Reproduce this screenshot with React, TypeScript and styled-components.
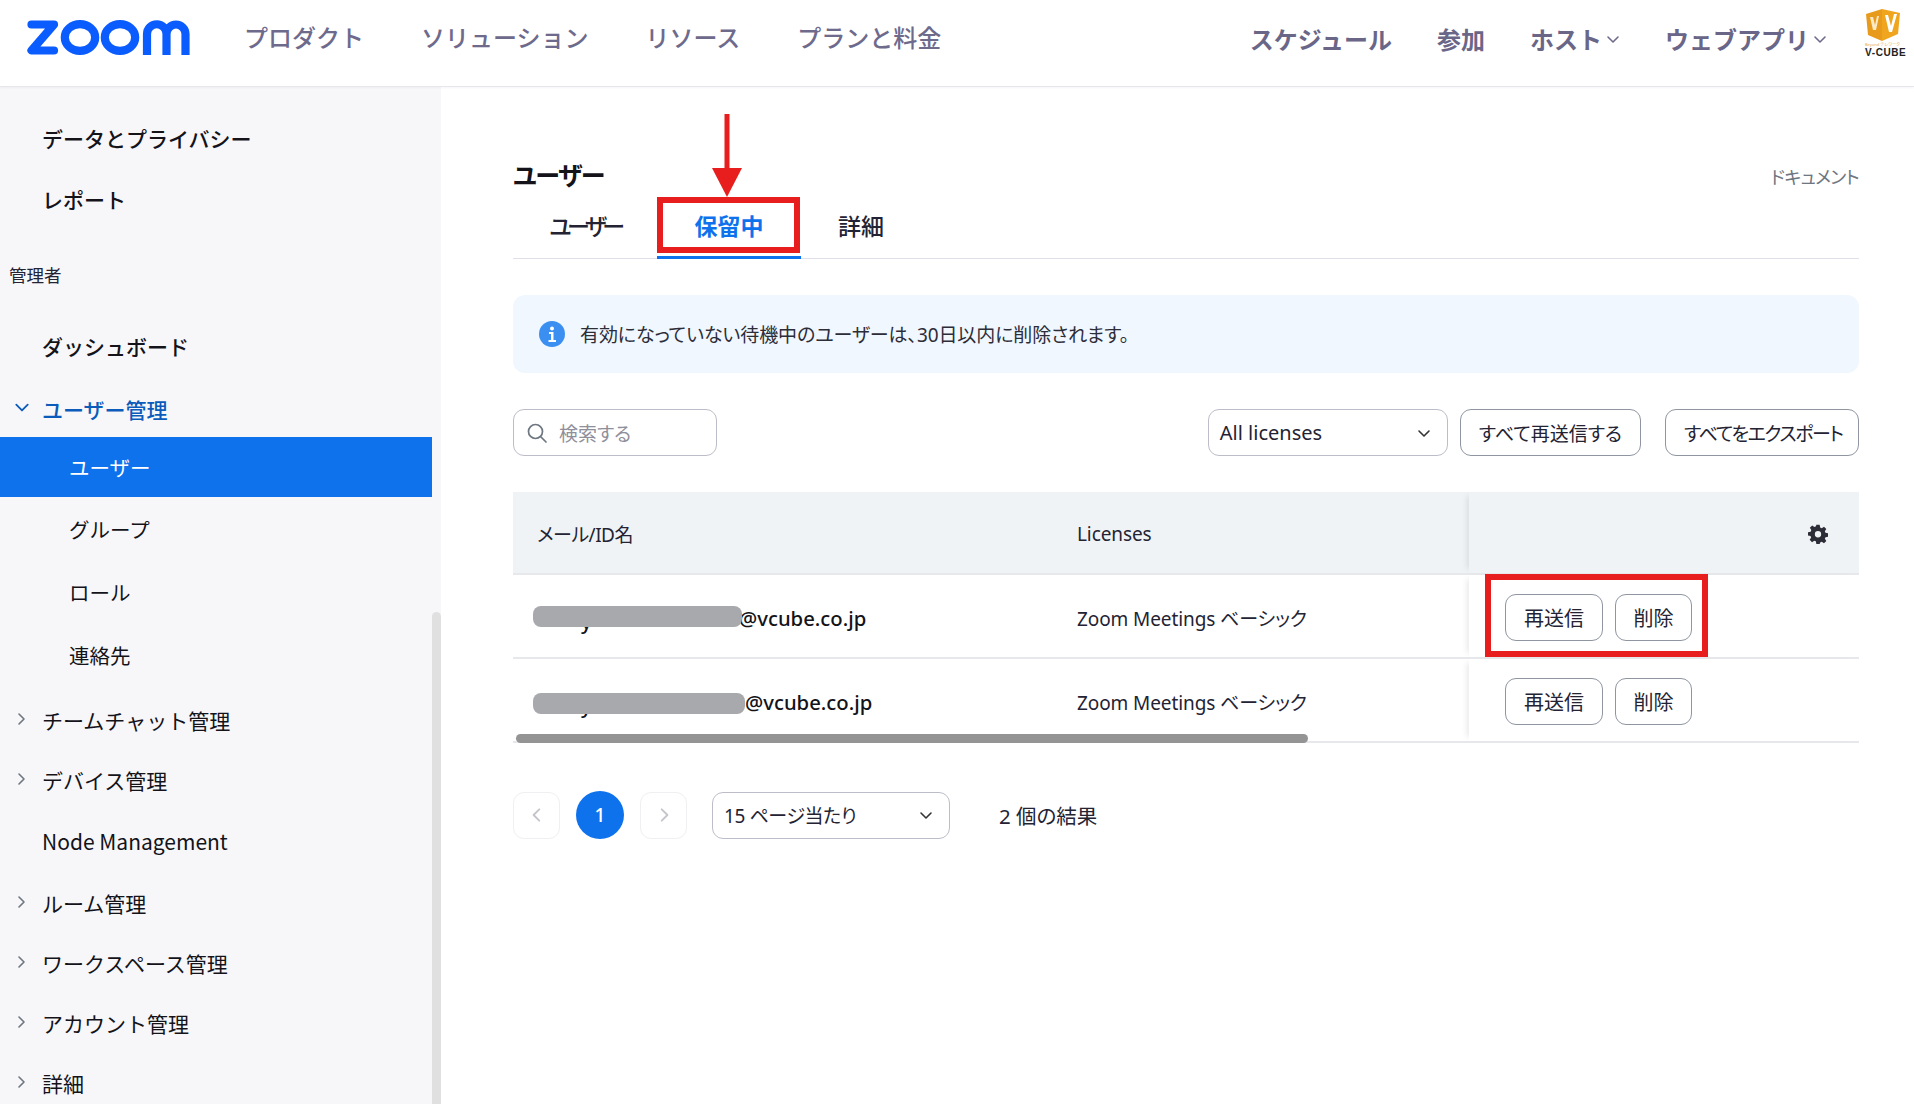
import React from "react";
import styled, { createGlobalStyle } from "styled-components";

const Global = createGlobalStyle`
  html, body { margin: 0; padding: 0; background: #fff; }
  * { box-sizing: border-box; }
  body { font-family: "Noto Sans", "Noto Sans CJK JP", sans-serif; color: #232333; overflow: hidden; }
`;

const sideTop = [
  { label: "チームチャット管理", arrow: true, gap: 5 },
  { label: "デバイス管理", arrow: true, gap: 0 },
  { label: "Node Management", arrow: false, gap: 1 },
  { label: "ルーム管理", arrow: true, gap: 2 },
  { label: "ワークスペース管理", arrow: true, gap: 0 },
  { label: "アカウント管理", arrow: true, gap: 0 },
  { label: "詳細", arrow: true, gap: 0 },
];

const rows = [
  { name: 209, domain: "@vcube.co.jp", textLeft: 206, maskTop: 3.5 },
  { name: 212, domain: "@vcube.co.jp", textLeft: 212, maskTop: 6.5 },
];

const Chevron = ({ dir, color = "#6e7680", size = 14 }: { dir: "down" | "right" | "left"; color?: string; size?: number }) => {
  const d = dir === "down" ? "M2 5l5 5 5-5" : dir === "right" ? "M5 2l5 5-5 5" : "M9 2L4 7l5 5";
  return (
    <svg width={size} height={size} viewBox="0 0 14 14" fill="none">
      <path d={d} stroke={color} strokeWidth="1.6" strokeLinecap="round" strokeLinejoin="round" />
    </svg>
  );
};

const ZoomLogo = () => (
  <svg width="164" height="36" viewBox="0 0 164 36" fill="none" stroke="#0b5cff" strokeWidth="8.200">
    <path d="M4.500 4.500H27L4.500 30.500H27" strokeLinejoin="round" strokeLinecap="round" />
    <ellipse cx="53" cy="17.500" rx="15.200" ry="13.400" />
    <ellipse cx="93" cy="17.500" rx="15.200" ry="13.400" />
    <path d="M120 35V14a9.750 9.750 0 0 1 19.500 0V35M139.500 14a9.500 9.500 0 0 1 19 0V35" />
  </svg>
);

const CubeLogo = () => (
  <svg width="36" height="32" viewBox="0 0 36 32">
    <path d="M1 5L17 0v32L3 26z" fill="#e89a1c" />
    <path d="M17 0l18 4-2 21-16 7z" fill="#f0a51f" />
    <path d="M5 8h3l2 8 2-9h2l-3 14H8z" fill="#fdeac5" />
    <path d="M20 6h3l3 11 3-12h3l-5 18h-3z" fill="#fff" />
  </svg>
);

const Gear = () => (
  <svg width="20" height="20" viewBox="0 0 24 24" fill="#2d2d38">
    <path fillRule="evenodd" d="M10 1h4l.6 3.200 1.900.8L19.200 3.200l2.800 2.800-1.800 2.700.8 1.900 3.200.6v4l-3.200.6-.8 1.900 1.800 2.700-2.800 2.800-2.700-1.800-1.900.8L14 24h-4l-.6-3.200-1.900-.8-2.700 1.800L2 19l1.800-2.700-.8-1.900L0 13.800v-4l3.200-.6.8-1.900L2.200 4.600 5 1.800l2.700 1.800 1.900-.8zM12 8.500a3.800 3.800 0 100 7.600 3.800 3.800 0 000-7.600z" />
  </svg>
);

export default function App() {
  return (
    <>
      <Global />
      <Page>
        <Header>
          <LogoBox><ZoomLogo /></LogoBox>
          <LeftNav>
            <NavLink>プロダクト</NavLink>
            <NavLink>ソリューション</NavLink>
            <NavLink>リソース</NavLink>
            <NavLink>プランと料金</NavLink>
          </LeftNav>
          <RightNav>
            <NavBold>スケジュール</NavBold>
            <NavBold>参加</NavBold>
            <NavBold>ホスト<Chevron dir="down" color="#6e6a8c" /></NavBold>
            <NavBold>ウェブアプリ<Chevron dir="down" color="#6e6a8c" /></NavBold>
          </RightNav>
          <Brand>
            <CubeLogo />
            <BrandTag>Beyond テレワーク</BrandTag>
            <BrandName>V-CUBE</BrandName>
          </Brand>
        </Header>
        <Body>
          <Sidebar>
            <SideList>
              <SideItem $h={61} $medium>データとプライバシー</SideItem>
              <SideItem $h={62} $medium>レポート</SideItem>
              <SideCaption>管理者</SideCaption>
              <SideItem $medium>ダッシュボード</SideItem>
              <SideItem $open $h={61}>
                <SideArrow><Chevron dir="down" color="#0b5cba" size={16} /></SideArrow>
                ユーザー管理
              </SideItem>
              <SubActive>ユーザー</SubActive>
              <SubItem $gap={2}>グループ</SubItem>
              <SubItem>ロール</SubItem>
              <SubItem>連絡先</SubItem>
              {sideTop.map((s) => (
                <SideItem key={s.label} $gap={s.gap}>
                  {s.arrow && <SideArrow><Chevron dir="right" size={14} /></SideArrow>}
                  {s.label}
                </SideItem>
              ))}
            </SideList>
            <SideTrack><SideThumb /></SideTrack>
          </Sidebar>
          <Main>
            <TitleRow>
              <Title>ユーザー</Title>
              <DocLink>ドキュメント</DocLink>
            </TitleRow>
            <Tabs>
              <Tab $w={144} $tight>ユーザー</Tab>
              <Tab $w={144} $active>
                保留中
                <Highlight />
                <ArrowMark width="30" height="83" viewBox="0 0 30 83">
                  <rect x="12.500" y="0" width="5" height="56" fill="#e81e1e" />
                  <path d="M0 54h30L15 83z" fill="#e81e1e" />
                </ArrowMark>
              </Tab>
              <Tab $w={120}>詳細</Tab>
            </Tabs>
            <Notice>
              <svg width="26" height="26" viewBox="0 0 26 26">
                <circle cx="13" cy="13" r="13" fill="#3a8ff0" />
                <circle cx="13" cy="7.500" r="2" fill="#fff" />
                <path d="M10 11h4.500v8H17v2H9.500v-2H12v-6h-2z" fill="#fff" />
              </svg>
              有効になっていない待機中のユーザーは、30日以内に削除されます。
            </Notice>
            <Toolbar>
              <SearchBox>
                <svg width="20" height="20" viewBox="0 0 20 20" fill="none">
                  <circle cx="8.500" cy="8.500" r="7" stroke="#6e7680" strokeWidth="1.700" />
                  <path d="M13.500 13.500L19 19" stroke="#6e7680" strokeWidth="1.700" strokeLinecap="round" />
                </svg>
                検索する
              </SearchBox>
              <ToolbarRight>
                <Select $w={240} $size={20}>All licenses<Chevron dir="down" color="#333" /></Select>
                <OutlineButton>すべて再送信する</OutlineButton>
                <OutlineButton $gap={12} $tight>すべてをエクスポート</OutlineButton>
              </ToolbarRight>
            </Toolbar>
            <Table>
              <HeadRow>
                <EmailCell $head>メール/ID名</EmailCell>
                <LicenseCell>Licenses</LicenseCell>
                <ActionCell $head><Gear /></ActionCell>
              </HeadRow>
              {rows.map((r, i) => (
                <Row key={i}>
                  <EmailCell>
                    <MaskedName $w={r.textLeft}>
                      <HiddenChar>y</HiddenChar>
                      <Mask $w={r.name} $top={r.maskTop} />
                    </MaskedName>
                    <Domain>{r.domain}</Domain>
                  </EmailCell>
                  <LicenseCell>Zoom Meetings ベーシック</LicenseCell>
                  <ActionCell>
                    <RowButton $w={98}>再送信</RowButton>
                    <RowButton $w={77}>削除</RowButton>
                    {i === 0 && <RowHighlight />}
                  </ActionCell>
                </Row>
              ))}
              <HScroll />
            </Table>
            <Pager>
              <PageArrow><Chevron dir="left" color="#c4c4cc" size={16} /></PageArrow>
              <PageNum>1</PageNum>
              <PageArrow><Chevron dir="right" color="#c4c4cc" size={16} /></PageArrow>
              <PageSelect $w={238} $size={19}>15 ページ当たり<Chevron dir="down" color="#333" /></PageSelect>
              <Result>2 個の結果</Result>
            </Pager>
          </Main>
        </Body>
      </Page>
    </>
  );
}

const Page = styled.div`
  width: 1914px;
  height: 1104px;
  overflow: hidden;
  display: flex;
  flex-direction: column;
`;

const Header = styled.header`
  height: 87px;
  flex: none;
  display: flex;
  align-items: flex-start;
  border-bottom: 1px solid #e6e6ec;
  box-shadow: 0 1px 2px rgba(0, 0, 0, 0.04);
  position: relative;
  z-index: 2;
  background: #fff;
`;

const LogoBox = styled.div`
  width: 244px;
  padding: 20px 0 0 27px;
  flex: none;
`;

const LeftNav = styled.nav`
  display: flex;
  gap: 57px;
  padding-top: 19px;
`;

const NavLink = styled.a`
  font-family: "Noto Sans CJK JP", sans-serif;
  font-size: 24px;
  line-height: 36px;
  font-weight: 500;
  color: #6e6a8c;
`;

const RightNav = styled.nav`
  margin-left: auto;
  display: flex;
  gap: 45px;
  padding-top: 21px;
`;

const NavBold = styled.a`
  display: flex;
  align-items: center;
  gap: 4px;
  font-family: "Noto Sans CJK JP", sans-serif;
  font-size: 24px;
  line-height: 36px;
  font-weight: 700;
  color: #6a6688;
`;

const Brand = styled.div`
  width: 48px;
  margin: 9px 1px 0 38px;
  display: flex;
  flex-direction: column;
  align-items: flex-start;
`;

const BrandTag = styled.div`
  font-size: 4px;
  line-height: 6px;
  margin-top: 1px;
  color: #e9a44a;
  white-space: nowrap;
`;

const BrandName = styled.div`
  font-family: "Liberation Sans", sans-serif;
  font-size: 10px;
  line-height: 9px;
  font-weight: 700;
  letter-spacing: 0.6px;
  color: #222;
`;

const Body = styled.div`
  flex: 1;
  display: flex;
  min-height: 0;
`;

const Sidebar = styled.aside`
  width: 441px;
  flex: none;
  display: flex;
  background: #f7f7fa;
  overflow: hidden;
`;

const SideList = styled.div`
  flex: 1;
  padding-top: 20px;
  font-family: "Noto Sans CJK JP", sans-serif;
`;

const SideItem = styled.div<{ $h?: number; $medium?: boolean; $open?: boolean; $gap?: number }>`
  position: relative;
  height: ${(p) => p.$h ?? 60}px;
  margin-top: ${(p) => p.$gap ?? 0}px;
  padding: ${(p) => (p.$open ? "4px" : "0")} 0 0 42px;
  display: flex;
  align-items: center;
  font-size: 21px;
  font-weight: ${(p) => (p.$medium || p.$open ? 500 : 400)};
  color: ${(p) => (p.$open ? "#0b5cba" : "#131319")};
`;

const SideArrow = styled.span`
  position: absolute;
  left: 14px;
  top: 50%;
  margin-top: -8px;
  display: flex;
`;

const SideCaption = styled.div`
  height: 30px;
  margin: 30px 0 26px 9px;
  font-size: 17.500px;
  line-height: 30px;
  color: #232333;
`;

const SubActive = styled.div`
  height: 60px;
  padding-left: 69px;
  display: flex;
  align-items: center;
  background: #0e72ed;
  color: #fff;
  font-size: 20.500px;
`;

const SubItem = styled.div<{ $gap?: number }>`
  height: 60px;
  margin-top: ${(p) => p.$gap ?? 3}px;
  padding-left: 69px;
  display: flex;
  align-items: center;
  font-size: 20.500px;
  color: #131319;
`;

const SideTrack = styled.div`
  width: 9px;
  flex: none;
  padding-top: 525px;
`;

const SideThumb = styled.div`
  height: 100%;
  background: #e0e0e0;
  border-radius: 5px 5px 0 0;
`;

const Main = styled.main`
  flex: 1;
  padding: 0 55px 0 72px;
  font-family: "Noto Sans", "Noto Sans CJK JP", sans-serif;
  font-feature-settings: "palt";
  font-size: 19px;
  color: #232333;
`;

const TitleRow = styled.div`
  height: 94px;
  padding-top: 72px;
  display: flex;
  justify-content: space-between;
  align-items: flex-start;
`;

const Title = styled.h1`
  margin: 0;
  font-size: 25px;
  line-height: 32px;
  font-weight: 700;
  letter-spacing: -1.500px;
  color: #131319;
`;

const DocLink = styled.a`
  font-size: 18px;
  line-height: 32px;
  margin-top: 2px;
  letter-spacing: -0.600px;
  color: #6e7680;
`;

const Tabs = styled.div`
  height: 78px;
  display: flex;
  align-items: flex-end;
  border-bottom: 1px solid #dfe0ea;
`;

const Tab = styled.div<{ $w: number; $active?: boolean; $tight?: boolean }>`
  position: relative;
  width: ${(p) => p.$w}px;
  height: 59px;
  margin-bottom: -1px;
  padding-top: 8px;
  text-align: center;
  font-size: 23px;
  line-height: 36px;
  letter-spacing: ${(p) => (p.$tight ? "-4.500px" : "0")};
  font-weight: ${(p) => (p.$active ? 700 : 500)};
  color: ${(p) => (p.$active ? "#0e72ed" : "#232333")};
  border-bottom: 3px solid ${(p) => (p.$active ? "#0e72ed" : "transparent")};
`;

const Highlight = styled.span`
  position: absolute;
  top: -3px;
  left: 0;
  width: 143px;
  height: 56px;
  border: 6px solid #e81e1e;
`;

const ArrowMark = styled.svg`
  position: absolute;
  left: 55px;
  top: -86px;
`;

const Notice = styled.div`
  height: 78px;
  margin-top: 36px;
  padding-left: 26px;
  display: flex;
  align-items: center;
  gap: 15px;
  background: #f0f7ff;
  border-radius: 12px;
  font-size: 19px;
  letter-spacing: -0.100px;
  color: #2d2d38;
`;

const Toolbar = styled.div`
  margin-top: 36px;
  height: 47px;
  display: flex;
  justify-content: space-between;
`;

const SearchBox = styled.div`
  width: 204px;
  height: 47px;
  padding-left: 13px;
  display: flex;
  align-items: center;
  gap: 12px;
  border: 1px solid #bdbdc9;
  border-radius: 11px;
  color: #8f8f9b;
`;

const ToolbarRight = styled.div`
  display: flex;
  gap: 12px;
`;

const Select = styled.div<{ $w: number; $size: number }>`
  width: ${(p) => p.$w}px;
  height: 47px;
  padding: 0 16px 0 11px;
  display: flex;
  align-items: center;
  justify-content: space-between;
  border: 1px solid #bdbdc9;
  border-radius: 11px;
  background: #fff;
  font-size: ${(p) => p.$size}px;
  color: #232333;
`;

const PageSelect = styled(Select)`
  margin-left: 9px;
  letter-spacing: -0.400px;
`;

const OutlineButton = styled.button<{ $gap?: number; $tight?: boolean }>`
  height: 47px;
  width: ${(p) => (p.$tight ? "194px" : "auto")};
  padding: 0 18px;
  margin-left: ${(p) => p.$gap ?? 0}px;
  border: 1px solid #8f96a1;
  border-radius: 11px;
  background: #fff;
  font: inherit;
  font-feature-settings: "palt";
  letter-spacing: ${(p) => (p.$tight ? "-1.400px" : "0")};
  white-space: nowrap;
  color: #232333;
`;

const Table = styled.div`
  position: relative;
  margin-top: 36px;
`;

const Row = styled.div`
  height: 84px;
  display: flex;
  align-items: center;
  border-bottom: 2px solid #e6e8ec;
`;

const HeadRow = styled(Row)`
  height: 83px;
  background: #f0f3f6;
`;

const EmailCell = styled.div<{ $head?: boolean }>`
  width: 564px;
  flex: none;
  padding: 3px 0 0 ${(p) => (p.$head ? 24 : 20)}px;
  display: flex;
  align-items: center;
  letter-spacing: ${(p) => (p.$head ? "-0.500px" : "0")};
`;

const Domain = styled.span`
  font-size: 20.300px;
  font-weight: 500;
  color: #131319;
`;

const MaskedName = styled.span<{ $w: number }>`
  position: relative;
  width: ${(p) => p.$w}px;
  height: 30px;
  display: block;
`;

const HiddenChar = styled.span`
  position: absolute;
  left: 48px;
  top: 3px;
  font-size: 20.300px;
  line-height: 30px;
  font-weight: 500;
  color: #131319;
`;

const Mask = styled.span<{ $w: number; $top: number }>`
  position: absolute;
  left: 0;
  top: ${(p) => p.$top}px;
  width: ${(p) => p.$w}px;
  height: 21px;
  border-radius: 8px;
  background: #a8a9ac;
`;

const LicenseCell = styled.div`
  flex: 1;
  padding-top: 3px;
  letter-spacing: -0.100px;
`;

const ActionCell = styled.div<{ $head?: boolean }>`
  position: relative;
  width: 390px;
  align-self: stretch;
  flex: none;
  padding: ${(p) => (p.$head ? "2px 31px 0 0" : "2px 0 0 36px")};
  display: flex;
  align-items: center;
  justify-content: ${(p) => (p.$head ? "flex-end" : "flex-start")};
  gap: 12px;
  box-shadow: -6px 0 6px -4px rgba(0, 0, 0, 0.09);
`;

const RowButton = styled.button<{ $w: number }>`
  width: ${(p) => p.$w}px;
  height: 47px;
  padding: 0;
  border: 1px solid #8f96a1;
  border-radius: 11px;
  background: #fff;
  font: inherit;
  font-size: 20px;
  color: #232333;
`;

const RowHighlight = styled.span`
  position: absolute;
  left: 16px;
  top: -1px;
  width: 223px;
  height: 83px;
  border: 6px solid #e81e1e;
`;

const HScroll = styled.div`
  position: absolute;
  left: 3px;
  bottom: 0;
  width: 792px;
  height: 9px;
  border-radius: 5px;
  background: #949494;
`;

const Pager = styled.div`
  margin-top: 48px;
  display: flex;
  align-items: center;
  gap: 16px;
`;

const PageArrow = styled.div`
  width: 47px;
  height: 47px;
  display: flex;
  align-items: center;
  justify-content: center;
  border: 1px solid #f0f0f3;
  border-radius: 11px;
`;

const PageNum = styled.div`
  width: 48px;
  height: 48px;
  display: flex;
  align-items: center;
  justify-content: center;
  border-radius: 50%;
  background: #0e72ed;
  color: #fff;
  font-weight: 500;
`;

const Result = styled.div`
  margin-left: 33px;
  font-size: 20.500px;
`;
